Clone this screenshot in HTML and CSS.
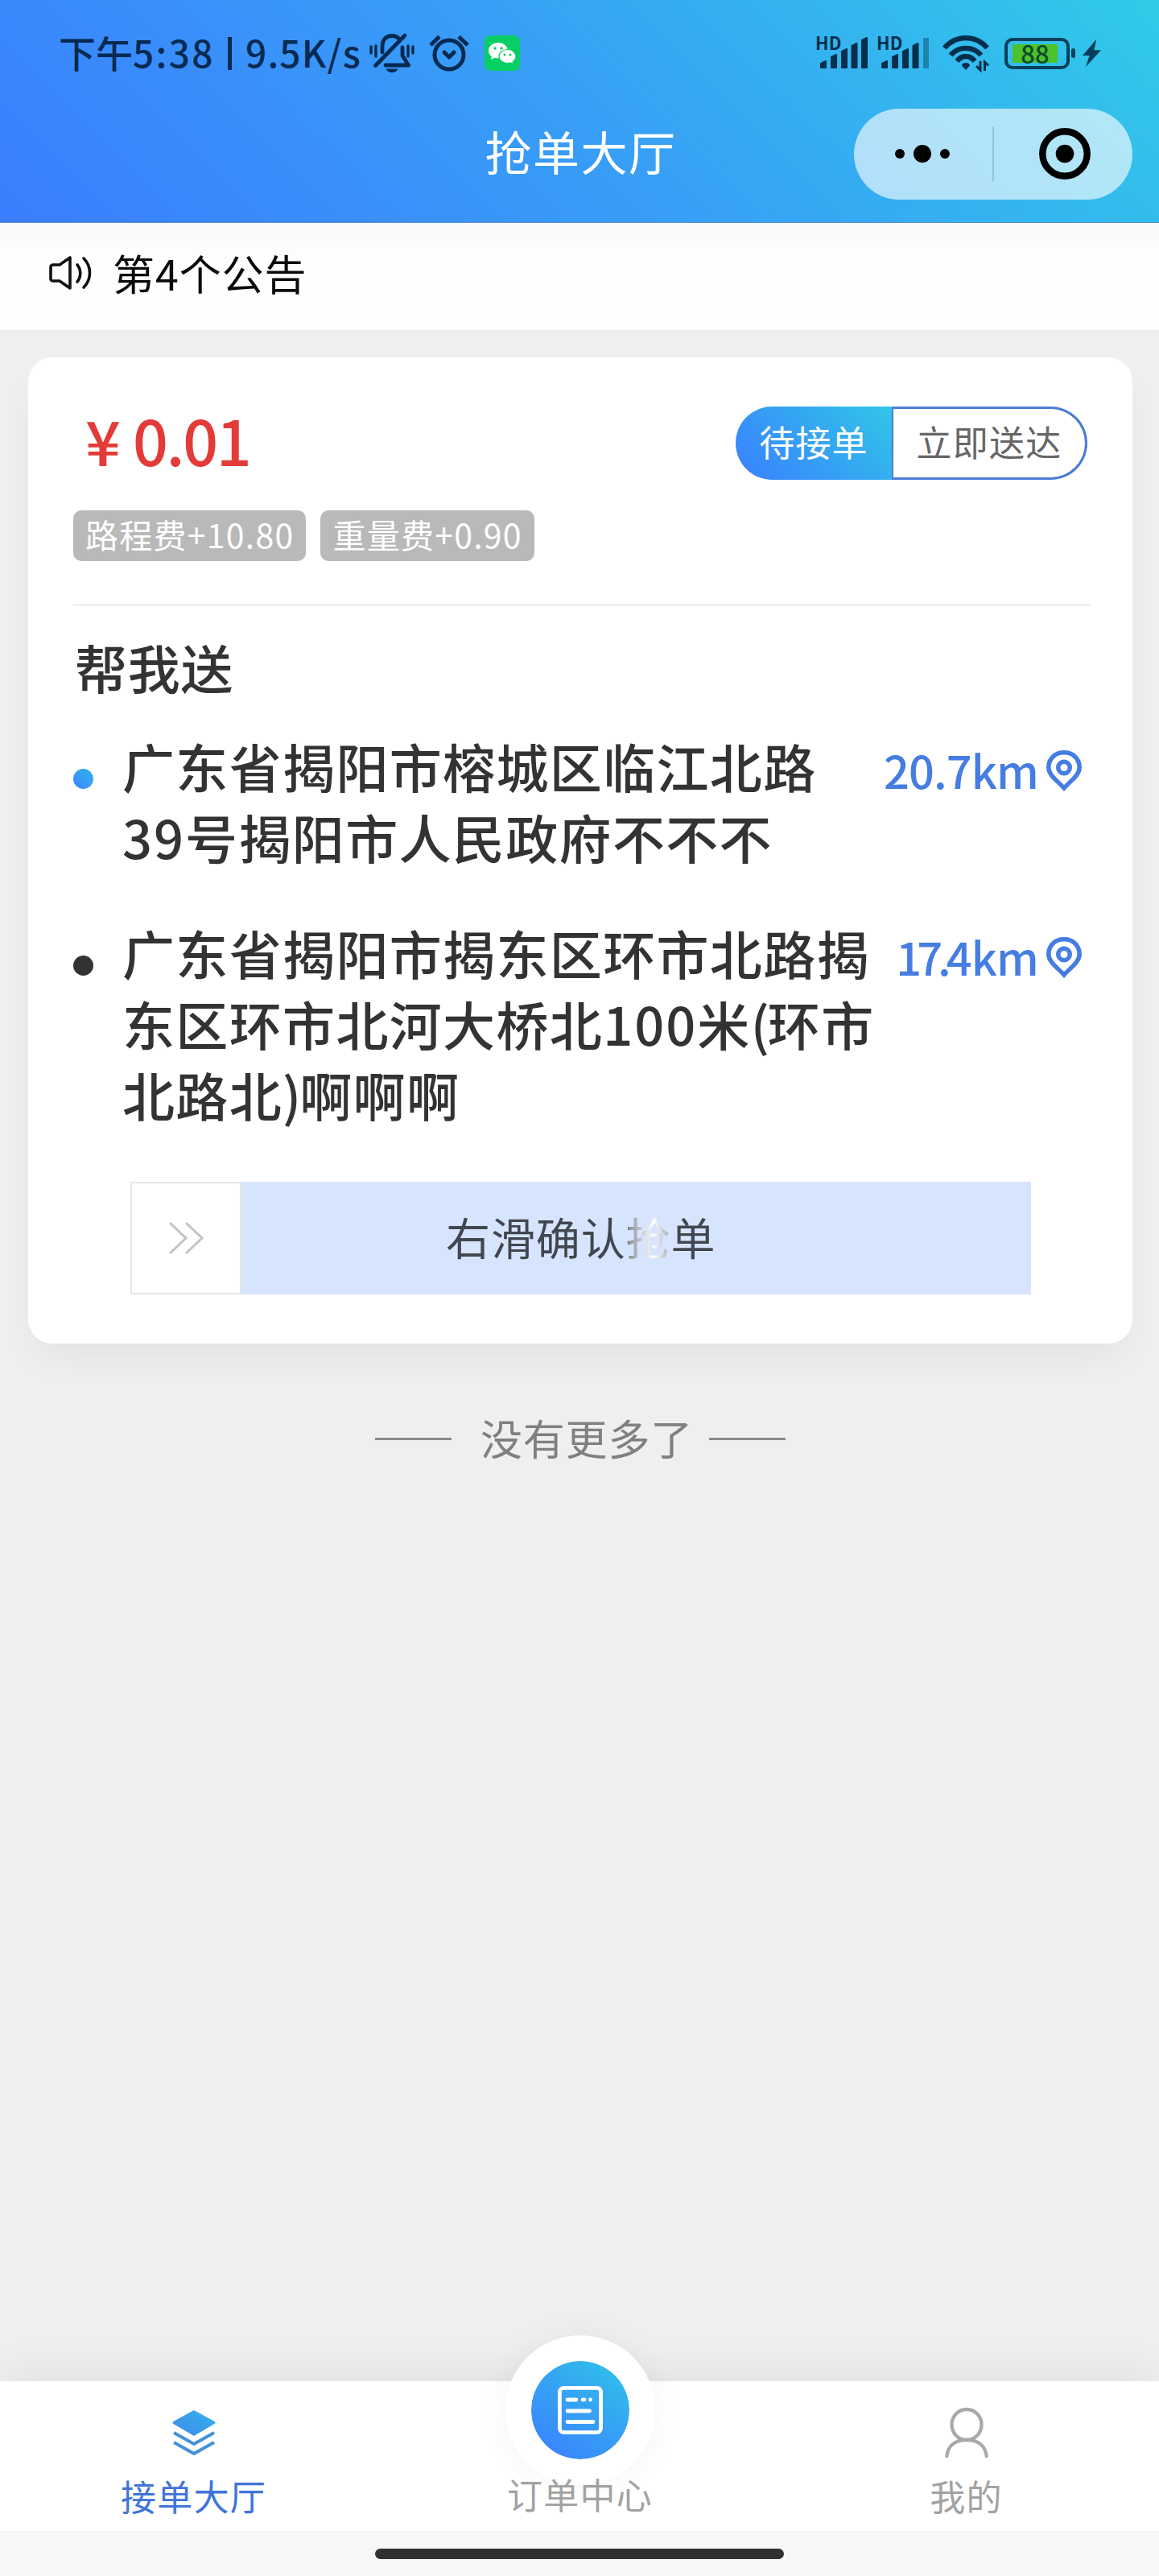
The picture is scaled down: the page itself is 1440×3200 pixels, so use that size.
FILE: index.html
```html
<!DOCTYPE html>
<html lang="zh-CN">
<head>
    <meta charset="UTF-8">
    <meta name="viewport" content="width=device-width, initial-scale=1.0">
    <title>抢单大厅</title>
    <link rel="stylesheet" href="styles.css">
</head>
<body>
    <div class="page">
        <header class="header">
            <div class="status-bar">
                <div class="status-left">
                    <span class="status-time">下午<span class="clock">5:38</span></span>
                    <span class="status-line"></span>
                    <span class="status-speed">9.5K/s</span>
                    <svg class="icon-bell" viewBox="0 0 56 48" fill="none" stroke="#062a52" stroke-width="4.8" stroke-linejoin="round" stroke-linecap="round">
                        <path d="M16 23V16C16 7 21 2.500 28 2.500c4 0 7 1.500 9 4M41 17v10l7.500 12H20"/>
                        <path d="M7.500 39.500 44 2"/>
                        <path d="M2 16v8M8 15v13M48 15v13M54 16v8" stroke-width="3.400"/>
                        <path d="M20.500 43.500h15c-1.500 3-4 4.500-7.500 4.500s-6-1.500-7.500-4.500z" fill="#062a52" stroke="none"/>
                    </svg>
                    <svg class="icon-alarm" viewBox="0 0 50 46" fill="none" stroke="#062a52" stroke-width="5">
                        <circle cx="25" cy="25" r="18"/>
                        <path d="M2 13 13 2.500M48 13 37 2.500"/>
                        <path d="M19 22l6 6 6-6" stroke-linecap="round" stroke-linejoin="round"/>
                    </svg>
                    <svg class="icon-wechat" viewBox="0 0 44 44">
                        <rect width="44" height="44" rx="8" fill="#07cf63"/>
                        <path d="M17 9C10 9 5 13.500 5 19c0 3 1.600 5.700 4 7.500L8 30l4.500-2.300c1.500.4 3 .6 4.500.6C24 28.300 29 24 29 19S24 9 17 9z" fill="#fff"/>
                        <path d="M28.500 17.500C22.500 17.500 18 21.300 18 26s4.500 8.500 10.500 8.500c1.200 0 2.500-.2 3.600-.5L36 36l-1-3.200c2.200-1.500 4-3.900 4-6.800 0-4.700-4.500-8.500-10.500-8.500z" fill="#fff" stroke="#07cf63" stroke-width="1.200"/>
                        <g fill="#07cf63"><circle cx="13" cy="16" r="1.700"/><circle cx="21" cy="16" r="1.700"/><circle cx="25" cy="24" r="1.500"/><circle cx="32" cy="24" r="1.500"/></g>
                    </svg>
                </div>
                <div class="status-right">
                    <div class="signal">
                        <span class="hd">HD</span>
                        <svg viewBox="0 0 62 40" fill="#062f4c" stroke="#062f4c" stroke-width="2" stroke-linejoin="round">
                            <path d="M2 38v-5l6-3v8zM15 38V25l6-3v16zM28 38V18l6-3v23zM40.500 38V11l6-3v30zM53 38V4l6-3v37z"/>
                        </svg>
                    </div>
                    <div class="signal signal-2">
                        <span class="hd">HD</span>
                        <svg viewBox="0 0 62 40" fill="#062f4c" stroke="#062f4c" stroke-width="2" stroke-linejoin="round">
                            <path d="M2 38v-5l6-3v8zM15 38V25l6-3v16zM28 38V18l6-3v23zM40.500 38V11l6-3v30z"/>
                            <path d="M53 1h7v38h-7z" opacity="0.4" stroke="none"/>
                        </svg>
                    </div>
                    <svg class="icon-wifi" viewBox="0 0 58 44" fill="none" stroke="#062f4c" stroke-width="6.400">
                        <path d="M2.500 15.500C17-1 41-1 55.500 15.500"/>
                        <path d="M10 24.500c10-11.500 28-11.500 38 0"/>
                        <path d="M18 32c6-8 16-8 22 0"/>
                        <path d="M29 34c3 0 5 1.500 5 3.500L29 43l-5-5.500c0-2 2-3.500 5-3.500z" fill="#062f4c" stroke="none"/>
                        <path d="M47 32v11l-5-5M52.500 44V33l4.500 4.500" stroke-width="3"/>
                    </svg>
                    <div class="battery">
                        <div class="battery-level">88</div>
                    </div>
                    <span class="battery-cap"></span>
                    <svg class="icon-bolt" viewBox="0 0 24 36"><path d="M18 0 0 21h9L4 36 24 14h-9z" fill="#063f5c"/></svg>
                </div>
            </div>
            <div class="nav-bar">
                <h1 class="nav-title">抢单大厅</h1>
                <div class="capsule">
                    <svg class="icon-more" viewBox="0 0 68 22"><circle cx="6" cy="11" r="6"/><circle cx="34" cy="11" r="11"/><circle cx="62" cy="11" r="6"/></svg>
                    <span class="capsule-line"></span>
                    <svg class="icon-target" viewBox="0 0 64 64"><circle cx="32" cy="32" r="27.700" fill="none" stroke="#000" stroke-width="8.400"/><circle cx="32" cy="32" r="11.300"/></svg>
                </div>
            </div>
        </header>

        <div class="notice">
            <svg class="icon-speaker" viewBox="0 0 54 42" fill="none" stroke="#111" stroke-width="3.600" stroke-linejoin="round" stroke-linecap="round">
                <path d="M5 11h8L26 2v38L13 31H5c-2 0-3-1-3-3V14c0-2 1-3 3-3z"/>
                <path d="M35 11c5 6 5 15 0 21M43 3c10 10 10 26 0 36"/>
            </svg>
            <span class="notice-text">第4个公告</span>
        </div>

        <main class="content">
            <section class="card">
                <div class="card-head">
                    <div class="price"><span class="yen">¥</span>0.01</div>
                    <div class="state">
                        <span class="state-now">待接单</span>
                        <span class="state-time">立即送达</span>
                    </div>
                </div>
                <div class="tags">
                    <span class="tag">路程费+10.80</span>
                    <span class="tag">重量费+0.90</span>
                </div>
                <h2 class="card-title">帮我送</h2>
                <div class="address">
                    <span class="dot dot-start"></span>
                    <p class="address-text">广东省揭阳市榕城区临江北路<br><span class="num">39</span>号揭阳市人民政府不不不</p>
                    <div class="distance">
                        <span>20.7km</span>
                        <svg class="icon-pin" viewBox="0 0 44 51" fill="none" stroke="#457de2" stroke-width="5.500"><path d="M22 47C14 38 2.800 31 2.800 21.500 2.800 10.500 11 2.800 22 2.800S41.200 10.500 41.200 21.500C41.200 31 30 38 22 47z"/><circle cx="22" cy="21.500" r="7.300"/></svg>
                    </div>
                </div>
                <div class="address">
                    <span class="dot dot-end"></span>
                    <p class="address-text">广东省揭阳市揭东区环市北路揭<br>东区环市北河大桥北<span class="num">100</span>米<span class="paren">(</span>环市<br>北路北<span class="paren">)</span>啊啊啊</p>
                    <div class="distance">
                        <span><span class="distance-tight">17.</span>4km</span>
                        <svg class="icon-pin" viewBox="0 0 44 51" fill="none" stroke="#457de2" stroke-width="5.500"><path d="M22 47C14 38 2.800 31 2.800 21.500 2.800 10.500 11 2.800 22 2.800S41.200 10.500 41.200 21.500C41.200 31 30 38 22 47z"/><circle cx="22" cy="21.500" r="7.300"/></svg>
                    </div>
                </div>
                <div class="slider">
                    <div class="slider-handle">
                        <svg viewBox="0 0 44 40" fill="none" stroke="#c4c4c4" stroke-width="3"><path d="M2 1l20 19L2 39M22 1l20 19-20 19"/></svg>
                    </div>
                    <span class="slider-text">右滑确认抢单</span>
                </div>
            </section>
            <div class="no-more">
                <span class="no-more-line"></span>
                <span>没有更多了</span>
                <span class="no-more-line"></span>
            </div>
        </main>

        <nav class="tab-bar">
            <a class="tab active">
                <svg class="icon-layers" viewBox="0 0 54 56">
                    <defs>
                        <linearGradient id="layers" x1="0" y1="1" x2="1" y2="0"><stop offset="0" stop-color="#3f8bea"/><stop offset="1" stop-color="#33b2ea"/></linearGradient>
                    </defs>
                    <path d="M27 0 52.500 14c1.500 1 1.500 2 0 3L27 32 1.500 17C0 16 0 15 1.500 14z" fill="url(#layers)"/>
                    <path d="M2 28l25 14 25-14M2 40l25 14 25-14" fill="none" stroke="#4591d8" stroke-width="4"/>
                </svg>
                <span>接单大厅</span>
            </a>
            <a class="tab tab-center">
                <span class="center-button">
                    <svg viewBox="0 0 56 60" fill="none" stroke="#fff" stroke-width="4.800" stroke-linecap="round">
                        <rect x="2.400" y="2.400" width="51.200" height="55.200" rx="5"/>
                        <path d="M12 17h11M31 17h2M40.500 17h.1M12 31h27.500M12 44.500h32"/>
                    </svg>
                </span>
                <span>订单中心</span>
            </a>
            <a class="tab">
                <svg class="icon-user" viewBox="0 0 54 62" fill="none" stroke="#a9a9a9" stroke-width="4.300" stroke-linecap="round">
                    <ellipse cx="27" cy="21" rx="18.500" ry="19"/>
                    <path d="M2.300 60C4 46 14 40 27 40s23 6 24.700 20"/>
                </svg>
                <span>我的</span>
            </a>
        </nav>
        <footer class="home-area">
            <span class="home-indicator"></span>
        </footer>
    </div>
</body>
</html>
```

FILE: styles.css
```css
* {
    box-sizing: border-box;
}

body {
    margin: 0;
    background-color: #efefef;
    font-family: 'Noto Sans CJK SC', 'Noto Sans', sans-serif;
    color: #333;
}

h1, h2, p {
    margin: 0;
    font-weight: 500;
}

svg {
    display: block;
    flex: none;
    overflow: visible;
}

.page {
    width: 1440px;
    height: 3200px;
    display: flex;
    flex-direction: column;
    overflow: hidden;
}

/* header */
.header {
    height: 277px;
    background: linear-gradient(45deg, #3b7dff 0%, #389ff6 50%, #30cbe8 100%);
    border-bottom: 1px solid #5b8fc4;
}

.status-bar {
    height: 132px;
    padding: 0 72px 0 73px;
    display: flex;
    justify-content: space-between;
    align-items: center;
    color: #062a52;
    font-size: 46px;
    font-weight: 500;
    line-height: 60px;
}

.status-left,
.status-right {
    display: flex;
    align-items: center;
}

.clock {
    letter-spacing: 2.4px;
}

.status-time,
.status-speed {
    margin-top: -5px;
    white-space: nowrap;
}

.status-time {
    width: 210px;
}

.status-line {
    width: 5px;
    height: 41px;
    background-color: #062a52;
}

.status-speed {
    width: 143px;
    margin-left: 17px;
    letter-spacing: 1.2px;
}

.icon-bell {
    width: 56px;
    height: 48px;
    margin-left: 11px;
}

.icon-alarm {
    width: 50px;
    height: 46px;
    margin-left: 18px;
}

.icon-wechat {
    width: 44px;
    height: 44px;
    margin-left: 19px;
}

.signal {
    position: relative;
    width: 65px;
    height: 40px;
    padding-left: 3px;
    margin-right: 11px;
    color: #062f4c;
}

.signal svg {
    width: 62px;
    height: 40px;
}

.hd {
    position: absolute;
    left: -2px;
    top: -2px;
    font-size: 22px;
    font-weight: 700;
    line-height: 16px;
}

.signal-2 {
    margin-right: 15px;
}

.icon-wifi {
    width: 58px;
    height: 44px;
    margin-right: 19px;
}

.battery {
    width: 81px;
    height: 39px;
    padding: 4px 5px;
    border: 4px solid #063f5c;
    border-radius: 10px;
}

.battery-level {
    width: 56px;
    height: 23px;
    margin-left: 1px;
    background-color: #4cc22c;
    color: #0a4a2a;
    font-size: 31px;
    line-height: 21px;
    text-align: center;
}

.battery-cap {
    width: 5px;
    height: 12px;
    margin: 0 9px 0 2px;
    border-radius: 3px;
    background-color: #063f5c;
}

.icon-bolt {
    width: 23px;
    height: 36px;
}

.nav-bar {
    height: 118px;
    padding: 0 33px 0 382px;
    display: flex;
    align-items: center;
    justify-content: space-between;
}

.nav-title {
    width: 679px;
    text-align: center;
    color: #fff;
    font-size: 58px;
    font-weight: 400;
    line-height: 80px;
    letter-spacing: 1.5px;
    margin-top: -9px;
}

.capsule {
    width: 346px;
    height: 113px;
    padding: 0 52px 0 51px;
    border-radius: 57px;
    background-color: rgba(255, 255, 255, 0.62);
    display: flex;
    align-items: center;
    justify-content: space-between;
}

.icon-more {
    width: 68px;
    height: 22px;
}

.capsule-line {
    width: 2px;
    height: 68px;
    margin-right: 4px;
    background-color: rgba(40, 110, 140, 0.25);
}

.icon-target {
    width: 64px;
    height: 64px;
}

/* notice */
.notice {
    height: 133px;
    padding-left: 61px;
    display: flex;
    align-items: center;
    background: linear-gradient(#f9f9f9, #fefefe 45px);
}

.icon-speaker {
    width: 54px;
    height: 42px;
    margin-top: -9px;
}

.notice-text {
    margin: -9px 0 0 25px;
    color: #0a0a0a;
    font-size: 52px;
    line-height: 70px;
    letter-spacing: 0.9px;
}

/* order card */
.content {
    flex: 1;
    padding: 34px 33px 0 35px;
}

.card {
    height: 1225px;
    padding: 61px 53px 0 56px;
    border-radius: 30px;
    background-color: #fff;
    box-shadow: 0 24px 50px -14px rgba(0, 0, 0, 0.07);
}

.card-head {
    display: flex;
    justify-content: space-between;
    align-items: center;
    height: 91px;
}

.price {
    display: flex;
    align-items: center;
    padding-left: 15px;
    margin-top: -10px;
    color: #e23b38;
    font-size: 77px;
    font-weight: 500;
    line-height: 90px;
    letter-spacing: -2.3px;
}

.yen {
    width: 59px;
}

.state {
    display: flex;
    width: 437px;
    height: 91px;
    margin-right: 3px;
    font-size: 44px;
    line-height: 86px;
    letter-spacing: 1.2px;
    text-align: center;
}

.state-now {
    width: 194px;
    border-radius: 46px 0 0 46px;
    background: linear-gradient(45deg, #3a7fff, #30c6e7);
    color: #fff;
}

.state-time {
    flex: 1;
    border: 3px solid #4c7cd4;
    border-left-width: 2px;
    border-radius: 0 46px 46px 0;
    color: #666;
    line-height: 80px;
}

.tags {
    display: flex;
    gap: 18px;
    margin-top: 38px;
    padding-bottom: 53px;
    border-bottom: 3px solid #f1f1f1;
}

.tag {
    height: 63px;
    padding: 0 15px;
    border-radius: 10px;
    background-color: #b9b9b9;
    color: #fff;
    font-size: 41px;
    line-height: 59px;
    letter-spacing: 1.25px;
}

.card-title {
    margin: 37px 0 41px 2px;
    font-size: 65px;
    line-height: 76px;
    letter-spacing: 0.8px;
}

.address {
    display: flex;
    align-items: flex-start;
    margin-bottom: 56px;
}

.dot {
    width: 25px;
    height: 25px;
    margin: 48px 36px 0 0;
    border-radius: 50%;
}

.dot-start {
    background: linear-gradient(45deg, #3a84ff, #34b4ec);
}

.dot-end {
    background-color: #333;
}

.address-text {
    flex: 1;
    font-size: 65px;
    line-height: 88px;
    letter-spacing: 1.35px;
    white-space: nowrap;
}

.num {
    letter-spacing: 2px;
}

.paren {
    letter-spacing: -2px;
}

.distance {
    display: flex;
    align-items: center;
    margin: 11px 10px 0 0;
    color: #457de2;
    font-size: 56px;
    font-weight: 500;
    line-height: 76px;
    letter-spacing: -0.9px;
}

.distance-tight {
    letter-spacing: -6px;
}

.icon-pin {
    width: 44px;
    height: 51px;
    margin: 2px 0 0 10px;
}

.slider {
    display: flex;
    align-items: center;
    width: 1119px;
    height: 140px;
    margin: 65px 0 0 71px;
    background-color: #d7e4fe;
}

.slider-handle {
    width: 138px;
    height: 140px;
    border: 2px solid #e6e6e6;
    background-color: #fff;
    display: flex;
    align-items: center;
    justify-content: center;
}

.slider-handle svg {
    width: 44px;
    height: 40px;
}

.slider-text {
    margin: -6px 0 0 254px;
    font-size: 55px;
    line-height: 74px;
    letter-spacing: 0.9px;
    background: linear-gradient(90deg, #41474f 67%, #8d939b 68%, #fff 77%, #a3a8ae 83%, #41474f 84%);
    -webkit-background-clip: text;
    background-clip: text;
    color: transparent;
}

.no-more {
    display: flex;
    justify-content: center;
    align-items: center;
    margin-top: 81px;
    color: #808080;
    font-size: 52px;
    line-height: 72px;
    letter-spacing: 0.8px;
}

.no-more-line {
    width: 95px;
    height: 3px;
    background-color: #8a8a8a;
}

.no-more-line:first-child {
    margin: 3px 36px 0 0;
}

.no-more-line:last-child {
    margin: 3px 0 0 20px;
}

/* bottom tabs */
.tab-bar {
    display: flex;
    height: 186px;
    background-color: #fff;
    box-shadow: 0 -10px 50px rgba(0, 0, 0, 0.06);
}

.tab {
    flex: 1;
    display: flex;
    flex-direction: column;
    align-items: center;
    justify-content: flex-end;
    padding: 0 0 14px 1px;
    color: #a2a2a2;
    font-size: 44px;
    line-height: 60px;
    letter-spacing: 1.2px;
}

.tab.active {
    color: #3f74d8;
}

.icon-layers {
    width: 54px;
    height: 56px;
    margin-bottom: 20px;
}

.icon-user {
    width: 54px;
    height: 62px;
    margin-bottom: 17px;
}

.tab-center {
    padding-bottom: 16px;
}

.center-button {
    flex: none;
    display: flex;
    align-items: center;
    justify-content: center;
    width: 186px;
    height: 186px;
    border: 32px solid #fff;
    border-radius: 50%;
    background: linear-gradient(35deg, #3a84ff 10%, #31bdea 90%) padding-box;
    box-shadow: 0 0 40px rgba(0, 0, 0, 0.05);
    margin-bottom: -19px;
}

.center-button svg {
    width: 56px;
    height: 60px;
}

.home-area {
    height: 56px;
    padding-top: 22px;
    background-color: #f7f7f7;
}

.home-indicator {
    display: block;
    width: 508px;
    height: 13px;
    margin: 0 auto;
    border-radius: 7px;
    background-color: #303030;
}
```
